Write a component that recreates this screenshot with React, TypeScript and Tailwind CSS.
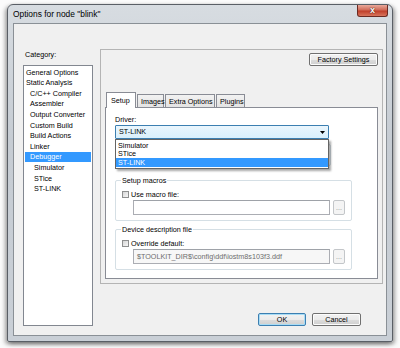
const font = "font-['Liberation_Sans',Arial,sans-serif]";

const Btn = (props: { label: string; w: string; focus?: boolean; disabled?: boolean }) => {
  return (
    <div
      className={`${props.w} h-[13px] flex items-center justify-center rounded-[2px] border text-[7.2px] leading-none
        ${props.focus ? "border-[#3c7fb1] shadow-[inset_0_0_0_1px_#a8dcf5]" : "border-[#707070] shadow-[inset_0_0_0_1px_#fcfcfc]"}
        ${props.disabled ? "text-[#8d8d8d] border-[#adb2b5]" : "text-black"}
        bg-[linear-gradient(#f2f2f2_0%,#ebebeb_50%,#dddddd_51%,#cfcfcf_100%)]`}
    >
      {props.label}
    </div>
  );
};

const Check = () => (
  <div className="w-[7px] h-[7px] border border-[#8e8f8f] bg-[linear-gradient(135deg,#d6d6d6,#f7f7f7)] shrink-0" />
);

const GroupBox = (props: { title: string; check: string; value?: string; disabled?: boolean }) => {
  return (
    <div className="relative w-[237px] h-[41px] border border-[#d5dfe5] rounded-[2px]">
      <div className="absolute left-[5px] top-[-5px] bg-white px-[1px] text-[7.2px] leading-[9px] text-black">
        {props.title}
      </div>
      <div className="flex items-center gap-[2px] pl-[6px] pt-[8px] h-[19px]">
        <Check />
        <span className="text-[7.2px] leading-none">{props.check}</span>
      </div>
      <div className="flex items-center gap-[3px] pl-[17px]">
        <div
          className={`w-[197px] h-[15px] border border-[#abadb3] border-t-[#9ea2a8] flex items-center pl-[3px] text-[7.2px] leading-none
            ${props.disabled ? "bg-[#f7f7f7] text-[#6d6d6d]" : "bg-white"}`}
        >
          {props.value}
        </div>
        <div className="w-[12px] h-[15px] rounded-[2px] border border-[#c3c6c9] bg-[#f4f4f4] text-[#8d8d8d] text-[7px] leading-none flex items-end justify-center pb-[3px]">
          ...
        </div>
      </div>
    </div>
  );
};

const categories: { name: string; indent: number; sel?: boolean }[] = [
  { name: "General Options", indent: 0 },
  { name: "Static Analysis", indent: 0 },
  { name: "C/C++ Compiler", indent: 4 },
  { name: "Assembler", indent: 4 },
  { name: "Output Converter", indent: 4 },
  { name: "Custom Build", indent: 4 },
  { name: "Build Actions", indent: 4 },
  { name: "Linker", indent: 4 },
  { name: "Debugger", indent: 4, sel: true },
  { name: "Simulator", indent: 8 },
  { name: "STice", indent: 8 },
  { name: "ST-LINK", indent: 8 },
];

export default function App() {
  return (
    <div className={`${font} w-[400px] h-[348px] bg-[#fbfbfb] pt-[4px] pl-[7px] overflow-hidden`}>
      {/* window frame */}
      <div className="w-[386px] h-[338px] rounded-t-[6px] rounded-b-[2px] border border-[#5a5f66] bg-[linear-gradient(180deg,#d7dce1_0%,#c6ccd3_40%,#c9cfd6_100%)] shadow-[-2px_2px_4px_rgba(0,0,0,0.35),2px_2px_4px_rgba(0,0,0,0.35)] flex flex-col">
        <div className="h-[18px] flex justify-between items-start pl-[5px] pr-[4px] shrink-0">
          <span className="pt-[5px] text-[8.4px] leading-none text-black">Options for node "blink"</span>
          <div className="w-[31px] h-[12px] rounded-b-[3px] border border-t-0 border-[#6b2a22] bg-[linear-gradient(180deg,#e9a99b_0%,#d06b58_45%,#c03f2a_55%,#d8755d_100%)] flex items-center justify-center">
            <span className="text-white text-[9px] font-bold leading-none [text-shadow:0_0_1px_#4a1a10,0_0_1px_#4a1a10]">x</span>
          </div>
        </div>
        {/* client */}
        <div className="mx-[5px] w-[374px] h-[313px] bg-[#f0f0f0] border border-[#8a9096] flex">
          {/* left column */}
          <div className="w-[86px] pl-[9px] pt-[26px] flex flex-col">
            <div className="text-[7.2px] leading-none h-[15px] pl-[2px] pt-[1px]">Category:</div>
            <div className="w-[70px] h-[261px] bg-white border border-[#828790] pt-[1px] px-[1px]">
              {categories.map((c) => (
                <div
                  key={c.name}
                  className={`h-[10.6px] flex items-center text-[7.2px] leading-none whitespace-nowrap
                    ${c.sel ? "bg-[#3399ff] text-white" : "text-black"}`}
                  style={{ paddingLeft: c.indent + 1 }}
                >
                  {c.name}
                </div>
              ))}
            </div>
          </div>
          {/* right column */}
          <div className="flex flex-col pt-[25px]">
            <div className="w-[283px] h-[235px] border border-[#b4b4b4] flex flex-col">
              <div className="flex justify-end pr-[4px] pt-[3px]">
                <Btn label="Factory Settings" w="w-[69px]" />
              </div>
              <div className="pl-[4px] pt-[26px] flex flex-col">
                {/* tabs */}
                <div className="flex items-end h-[15px] pl-[1px]">
                  <div className="w-[30px] h-[15px] bg-white border border-b-0 border-[#898c95] text-[7.2px] leading-none pt-[4px] pl-[4px] relative z-10 mb-[-1px] h-[16px]">
                    Setup
                  </div>
                  {[
                    ["Images", "w-[27px]"],
                    ["Extra Options", "w-[50px]"],
                    ["Plugins", "w-[29px]"],
                  ].map(([t, w]) => (
                    <div
                      key={t}
                      className={`${w} h-[13px] ml-[1px] border border-b-0 border-[#898c95] bg-[linear-gradient(#f2f2f2,#e3e3e3)] text-[7.2px] leading-none pt-[3px] pl-[3px] whitespace-nowrap`}
                    >
                      {t}
                    </div>
                  ))}
                </div>
                {/* tab page */}
                <div className="relative w-[273px] h-[172px] bg-white border border-[#898c95] pl-[9px] pt-[8px] flex flex-col">
                  <div className="text-[7.2px] leading-none h-[9px]">Driver:</div>
                  <div className="relative w-[214px] h-[14px] border border-[#3c7fb1] rounded-[1px] bg-[linear-gradient(#eaf6fd,#d9f0fc)] flex items-center justify-between pl-[3px] pr-[3px]">
                    <span className="text-[7.2px] leading-none">ST-LINK</span>
                    <svg width="5" height="3" viewBox="0 0 5 3">
                      <path d="M0 0 L5 0 L2.5 3 Z" fill="#000" />
                    </svg>
                    {/* open dropdown list */}
                    <div className="absolute left-[-1px] top-[13px] w-[214px] z-20 bg-white border border-[#646464] shadow-[2px_2px_2px_rgba(0,0,0,0.35)] flex flex-col py-[1px]">
                      <div className="h-[8.6px] flex items-center pl-[2px] text-[7.2px] leading-none">Simulator</div>
                      <div className="h-[8.6px] flex items-center pl-[2px] text-[7.2px] leading-none">STice</div>
                      <div className="h-[9px] flex items-center pl-[2px] text-[7.2px] leading-none bg-[#3399ff] text-white">ST-LINK</div>
                    </div>
                  </div>
                  {/* control partly hidden under the list */}
                  <div className="ml-[10px] mt-[5px] w-[206px] h-[22px] border border-[#d5dfe5] rounded-[2px]" />
                  <div className="mt-[14px] flex flex-col gap-[8px]">
                    <GroupBox title="Setup macros" check="Use macro file:" />
                    <GroupBox
                      title="Device description file"
                      check="Override default:"
                      value="$TOOLKIT_DIR$\config\ddf\iostm8s103f3.ddf"
                      disabled
                    />
                  </div>
                </div>
              </div>
            </div>
            <div className="flex gap-[6px] pl-[158px] pt-[29px]">
              <Btn label="OK" w="w-[48px]" focus />
              <Btn label="Cancel" w="w-[49px]" />
            </div>
          </div>
        </div>
      </div>
    </div>
  );
}
